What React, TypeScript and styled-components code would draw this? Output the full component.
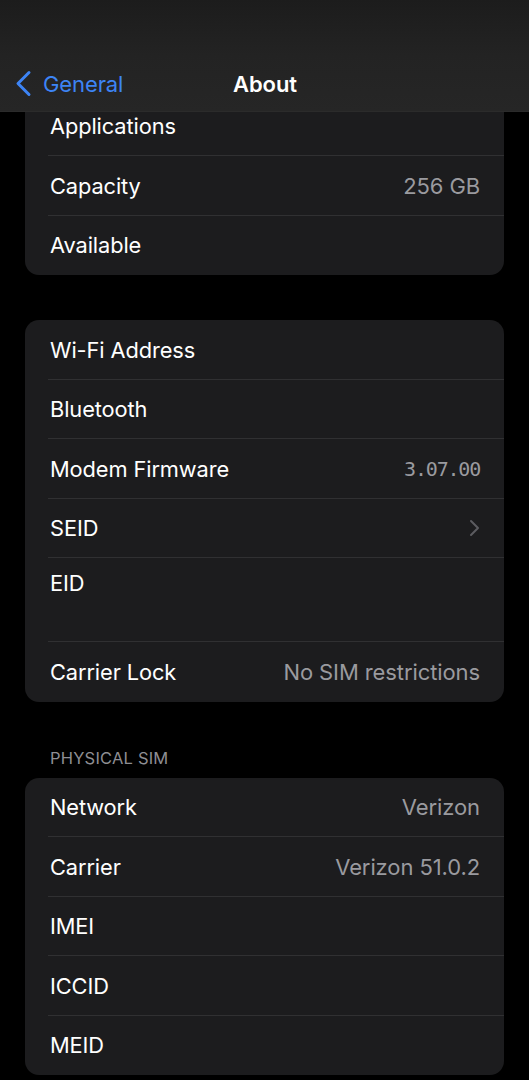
import React from 'react';
import styled, { createGlobalStyle } from 'styled-components';

const GlobalStyle = createGlobalStyle`
  html, body {
    margin: 0;
    padding: 0;
    background: #000000;
  }
  body {
    font-family: Inter, "Noto Sans", sans-serif;
    -webkit-font-smoothing: antialiased;
  }
`;

const Screen = styled.div`
  position: relative;
  width: 529px;
  height: 1080px;
  overflow: hidden;
  background: #000000;
`;

const NavBar = styled.header`
  position: absolute;
  top: 0;
  left: 0;
  right: 0;
  height: 112px;
  z-index: 2;
  background: linear-gradient(180deg, #1c1c1c 0%, #232323 50%, #262626 100%);
  border-bottom: 1px solid #2b2b2b;
  display: grid;
  grid-template-columns: 1fr auto 1fr;
  align-items: end;
  padding: 0 14px 14px 15px;
  box-sizing: border-box;
`;

const BackButton = styled.div`
  display: flex;
  align-items: center;
  gap: 11px;
  color: #3d84f5;
  font-size: 22px;
  letter-spacing: -0.1px;
`;

const Title = styled.h1`
  margin: 0;
  color: #ffffff;
  font-size: 22px;
  font-weight: 600;
  letter-spacing: -0.1px;
`;

const Content = styled.main`
  display: flex;
  flex-direction: column;
  padding: 96.5px 25px 0;
`;

const Card = styled.section<{ gapTop: number }>`
  margin-top: ${(p) => p.gapTop}px;
  background: #1c1c1e;
  border-radius: 14px;
  overflow: hidden;
`;

const Row = styled.div<{ tall?: boolean; last?: boolean }>`
  position: relative;
  height: ${(p) => (p.tall ? 84 : 59.5)}px;
  display: flex;
  align-items: ${(p) => (p.tall ? 'flex-start' : 'center')};
  justify-content: space-between;
  padding: ${(p) => (p.tall ? '12px 24px 0 25px' : '0 24px 0 25px')};
  box-sizing: border-box;
  ${(p) =>
    !p.last &&
    `&::after {
      content: '';
      position: absolute;
      left: 23px;
      right: 0;
      bottom: 0;
      height: 1px;
      background: #303032;
    }`}
`;

const Label = styled.span`
  color: #ffffff;
  font-size: 21.8px;
  letter-spacing: -0.1px;
`;

const Value = styled.span<{ mono?: boolean }>`
  color: #9a9a9f;
  font-size: ${(p) => (p.mono ? '20px' : '22px')};
  font-family: ${(p) => (p.mono ? '"DejaVu Sans Mono", monospace' : 'inherit')};
  letter-spacing: ${(p) => (p.mono ? '-1.2px' : '-0.1px')};
`;

const SectionHeader = styled.div`
  margin-top: 46px;
  padding: 0 25px 10px;
  color: #8e8e93;
  font-size: 16.5px;
  letter-spacing: 0.2px;
  text-transform: uppercase;
`;

const Chevron = () => (
  <svg width="11" height="18" viewBox="0 0 11 18" fill="none">
    <path d="M2 2l7 7-7 7" stroke="#5c5c60" strokeWidth="2" strokeLinecap="round" strokeLinejoin="round" />
  </svg>
);

const BackChevron = () => (
  <svg width="17" height="27" viewBox="0 0 17 27" fill="none">
    <path d="M14 2.5L3 13.5l11 11" stroke="#3d84f5" strokeWidth="3" strokeLinecap="round" strokeLinejoin="round" />
  </svg>
);

type Item = { label: string; value?: string; mono?: boolean; chevron?: boolean; tall?: boolean };

const storage: Item[] = [
  { label: 'Applications' },
  { label: 'Capacity', value: '256 GB' },
  { label: 'Available' },
];

const network: Item[] = [
  { label: 'Wi-Fi Address' },
  { label: 'Bluetooth' },
  { label: 'Modem Firmware', value: '3.07.00', mono: true },
  { label: 'SEID', chevron: true },
  { label: 'EID', tall: true },
  { label: 'Carrier Lock', value: 'No SIM restrictions' },
];

const sim: Item[] = [
  { label: 'Network', value: 'Verizon' },
  { label: 'Carrier', value: 'Verizon 51.0.2' },
  { label: 'IMEI' },
  { label: 'ICCID' },
  { label: 'MEID' },
];

const Group = ({ items, gapTop }: { items: Item[]; gapTop: number }) => (
  <Card gapTop={gapTop}>
    {items.map((item, i) => (
      <Row key={item.label} tall={item.tall} last={i === items.length - 1}>
        <Label>{item.label}</Label>
        {item.value && <Value mono={item.mono}>{item.value}</Value>}
        {item.chevron && <Chevron />}
      </Row>
    ))}
  </Card>
);

export default function App() {
  return (
    <Screen>
      <GlobalStyle />
      <NavBar>
        <BackButton>
          <BackChevron />
          <span>General</span>
        </BackButton>
        <Title>About</Title>
        <div />
      </NavBar>
      <Content>
        <Group items={storage} gapTop={0} />
        <Group items={network} gapTop={45} />
        <SectionHeader>Physical SIM</SectionHeader>
        <Group items={sim} gapTop={0} />
      </Content>
    </Screen>
  );
}
